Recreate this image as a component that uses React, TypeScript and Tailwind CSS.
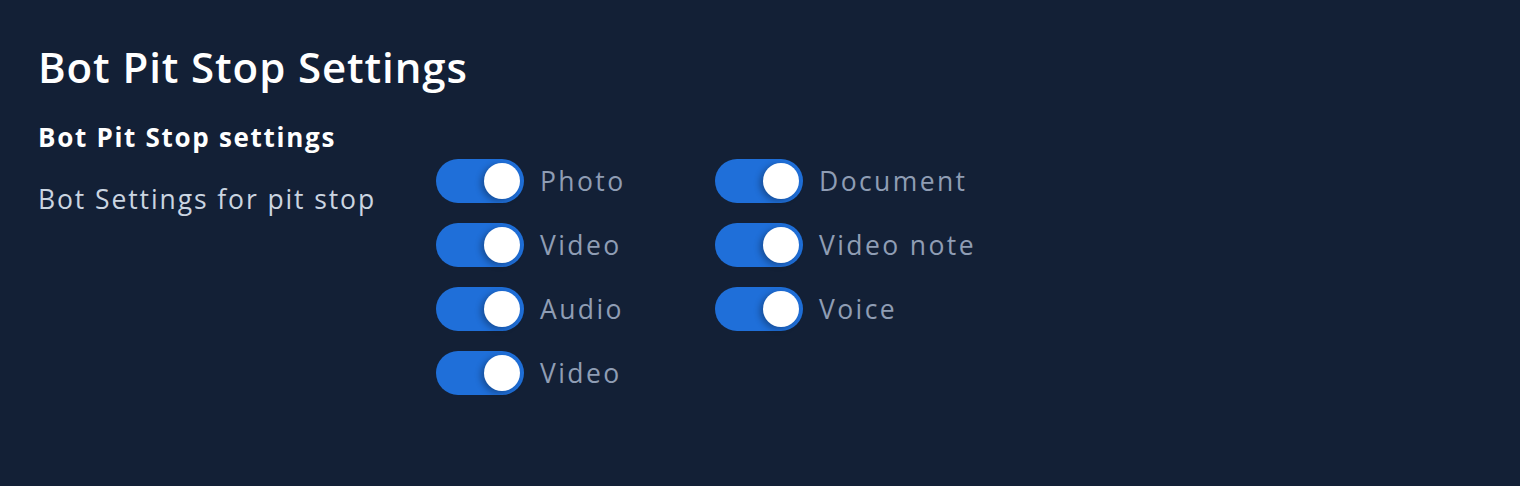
import React, { useState } from 'react';

type Item = { id: string; label: string };

const items: Item[] = [
  { id: 'photo', label: 'Photo' },
  { id: 'video', label: 'Video' },
  { id: 'audio', label: 'Audio' },
  { id: 'video2', label: 'Video' },
  { id: 'document', label: 'Document' },
  { id: 'videoNote', label: 'Video note' },
  { id: 'voice', label: 'Voice' },
];

function Toggle({ on, onChange }: { on: boolean; onChange: () => void }) {
  return (
    <button
      type="button"
      onClick={onChange}
      className={`flex h-[44px] w-[88px] shrink-0 items-center rounded-full p-1 ${
        on ? 'justify-end bg-[#1f6fd9]' : 'justify-start bg-[#334155]'
      }`}
    >
      <span className="h-9 w-9 rounded-full bg-white shadow-[-3px_2px_6px_rgba(0,0,0,0.3)]" />
    </button>
  );
}

export default function App() {
  const [state, setState] = useState<Record<string, boolean>>(
    Object.fromEntries(items.map((i) => [i.id, true]))
  );

  return (
    <main className="min-h-screen bg-[#132036] px-[38px] pt-[42px] font-['Open_Sans',sans-serif]">
      <h1 className="text-[42px] font-semibold leading-[50px] tracking-[0.9px] text-white">
        Bot Pit Stop Settings
      </h1>

      <h2 className="mt-[29px] text-[26px] font-bold leading-[32px] tracking-[1.7px] text-white">
        Bot Pit Stop settings
      </h2>

      <div className="mt-[6px] flex">
        {/* Section label */}
        <div className="w-[398px] pt-[24px] text-[26.5px] leading-[32px] tracking-[1.9px] text-[#cbd5e1]">
          Bot Settings for pit stop
        </div>

        {/* Toggles */}
        <div className="grid grid-flow-col grid-cols-[279px_auto] grid-rows-4 gap-y-5">
          {items.map((item) => (
            <label key={item.id} className="flex items-center gap-4">
              <Toggle
                on={state[item.id]}
                onChange={() => setState((s) => ({ ...s, [item.id]: !s[item.id] }))}
              />
              <span className="text-[26.5px] leading-[32px] tracking-[2.4px] text-[#8f9db4]">
                {item.label}
              </span>
            </label>
          ))}
        </div>
      </div>
    </main>
  );
}
